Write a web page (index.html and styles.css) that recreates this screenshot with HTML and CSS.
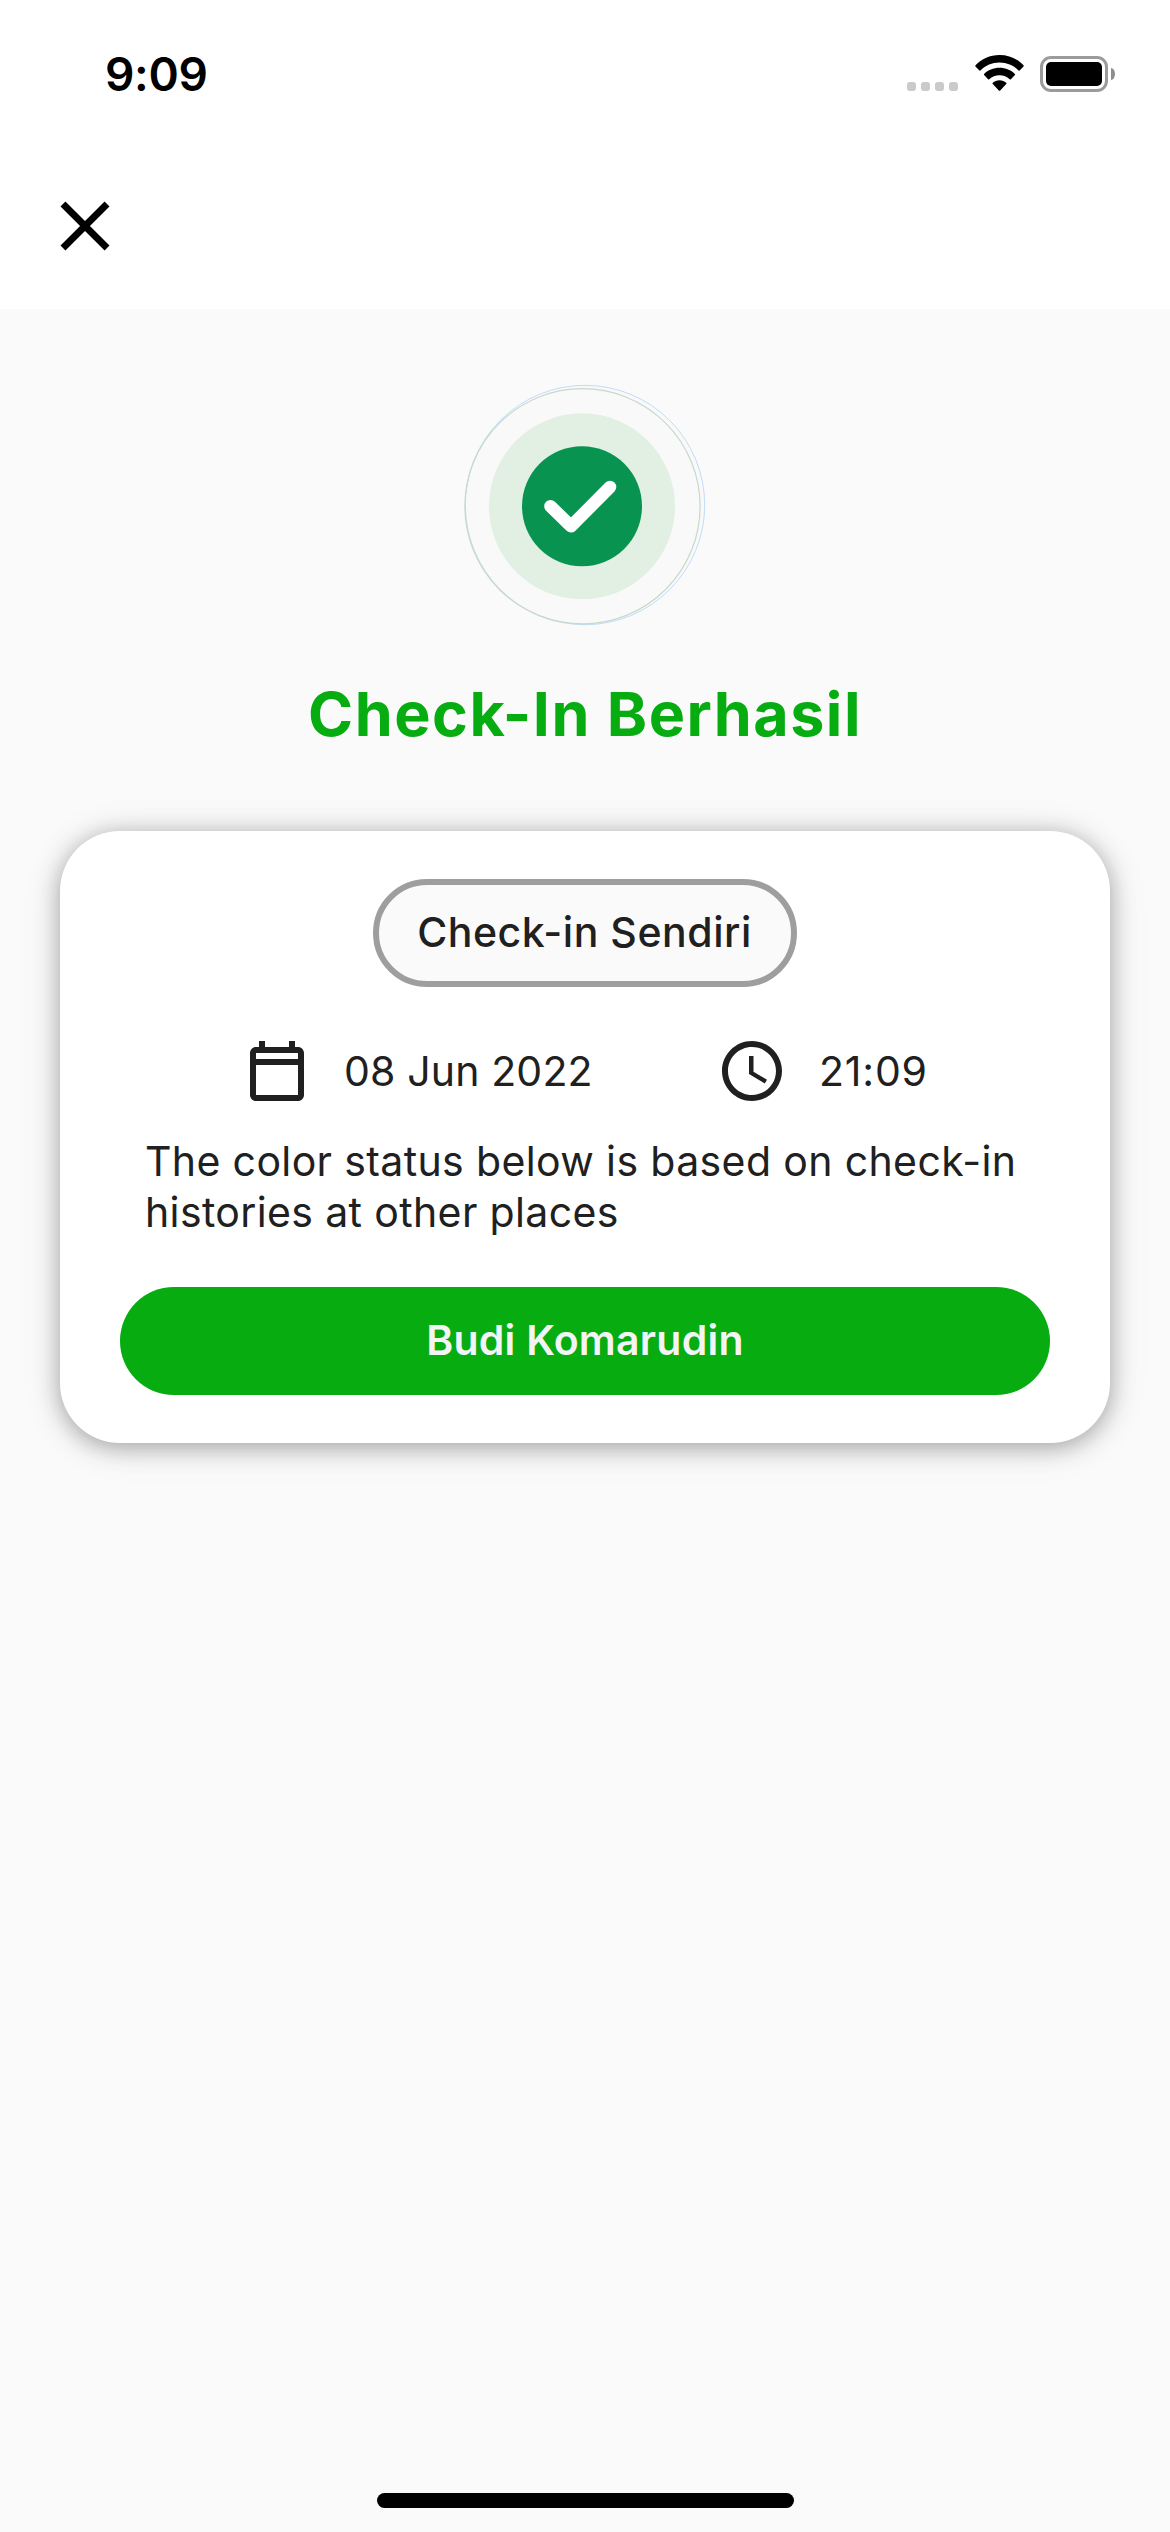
FILE: index.html
```html
<!DOCTYPE html>
<html lang="id">
<head>
<meta charset="utf-8">
<title>Check-In Berhasil</title>
<link rel="stylesheet" href="styles.css">
</head>
<body>
<div class="screen">
  <header class="header">
    <div class="status-bar">
      <span class="clock">9:09</span>
      <div class="status-icons">
        <div class="signal"><i></i><i></i><i></i><i></i></div>
        <svg class="wifi" viewBox="0 0 49 36">
          <path d="M24.5 0C34 0 42.500 3.800 48.500 10.300Q49 11 48.500 11.500L44.600 15.400Q44 16 43.300 15.300C38.500 10.600 32 7.600 24.500 7.600S10.500 10.600 5.700 15.300Q5 16 4.400 15.400L.5 11.500Q0 11 .5 10.300C6.500 3.800 15 0 24.500 0Z"/>
          <path d="M24.500 12.700C30.600 12.700 36 15 39.900 18.900Q40.400 19.500 39.900 20.100L35.900 24.200Q35.300 24.700 34.700 24.200C32 21.700 28.500 20.200 24.500 20.200S17 21.700 14.300 24.200Q13.700 24.700 13.100 24.200L9.100 20.100Q8.600 19.500 9.100 18.900C13 15 18.400 12.700 24.500 12.700Z"/>
          <path d="M24.500 25.200C27.200 25.200 29.500 26.200 31.200 27.800Q31.800 28.500 31.200 29.100L25.200 35.400Q24.500 36.100 23.800 35.400L17.800 29.100Q17.200 28.500 17.800 27.800C19.500 26.200 21.800 25.200 24.500 25.200Z"/>
        </svg>
        <div class="battery"><div class="battery-body"><div class="battery-level"></div></div><div class="battery-cap"></div></div>
      </div>
    </div>
    <svg class="close" viewBox="0 0 24 24"><path d="M19 6.410 17.590 5 12 10.590 6.410 5 5 6.410 10.590 12 5 17.590 6.410 19 12 13.410 17.590 19 19 17.590 13.410 12z"/></svg>
  </header>

  <main class="content">
    <svg class="success" viewBox="0 0 240 240">
      <circle cx="120" cy="120" r="119.700" fill="#f9f9f9" stroke="#a9cff5" stroke-width=".7"/>
      <circle cx="117.500" cy="121.300" r="117.600" fill="none" stroke="#c6d9ca" stroke-width="1.200"/>
      <circle cx="117" cy="121.300" r="93" fill="#e1f0e3"/>
      <circle cx="117" cy="121.300" r="60" fill="#089351"/>
      <path d="M85.500 121.200 106 141.300 145 102" fill="none" stroke="#fff" stroke-width="12.600" stroke-linecap="round" stroke-linejoin="round"/>
    </svg>
    <h1 class="title">Check-In Berhasil</h1>

    <section class="card">
      <div class="tag"><span>Check-in Sendiri</span></div>
      <div class="when">
        <svg class="icon" viewBox="0 0 24 24"><path d="M19 4h-1V2h-2v2H8V2H6v2H5c-1.100 0-2 .9-2 2v14c0 1.100.9 2 2 2h14c1.100 0 2-.9 2-2V6c0-1.100-.9-2-2-2zm0 16H5V10h14v10zm0-12H5V6h14v2z"/></svg>
        <span class="date">08 Jun 2022</span>
        <svg class="icon" viewBox="0 0 24 24"><path d="M11.990 2C6.470 2 2 6.480 2 12s4.470 10 9.990 10C17.520 22 22 17.520 22 12S17.520 2 11.990 2zM12 20c-4.420 0-8-3.580-8-8s3.580-8 8-8 8 3.580 8 8-3.580 8-8 8zm.5-13H11v6l5.250 3.150.75-1.230-4.500-2.670z"/></svg>
        <span class="time">21:09</span>
      </div>
      <p class="note">The color status below is based on check-in<br>histories at other places</p>
      <div class="person"><span>Budi Komarudin</span></div>
    </section>
  </main>
  <div class="home-indicator"></div>
</div>
</body>
</html>
```
FILE: styles.css
```css
* { box-sizing: border-box; }
body { margin: 0; background: #fafafa; font-family: Inter, "Liberation Sans", sans-serif; color: #202020; }
svg { display: block; flex: none; }
.screen { width: 1170px; height: 2532px; display: flex; flex-direction: column; overflow: hidden; }

.header { height: 309px; background: #fff; }
.status-bar { height: 184px; padding: 44px 55px 0 105px; display: flex; justify-content: space-between; align-items: flex-start; color: #000; }
.clock { font-size: 46px; line-height: 60px; font-weight: 600; letter-spacing: -.3px; white-space: nowrap; }
.status-icons { display: flex; padding-top: 11px; }
.signal { display: flex; gap: 5px; margin: 27px 17px 0 0; }
.signal i { width: 9px; height: 9px; border-radius: 3px; background: #cacaca; }
.wifi { width: 49px; height: 36px; }
.battery { display: flex; align-items: center; gap: 3px; height: 36px; margin: 1px 0 0 16px; }
.battery-body { width: 68px; height: 36px; border: 3px solid #9b9b9b; border-radius: 11px; padding: 3px; }
.battery-level { height: 24px; border-radius: 5px; background: #000; }
.battery-cap { width: 4px; height: 12px; border-radius: 0 4px 4px 0 / 0 6px 6px 0; background: #8e8e8e; }
.close { width: 84px; height: 84px; margin-left: 43px; }

.content { flex: 1; display: flex; flex-direction: column; padding: 76px 60px 0; }
.success { width: 240px; height: 240px; align-self: center; overflow: visible; }
.title { margin: 52px 0 0; height: 154px; line-height: 74px; font-size: 61px; font-weight: 700; letter-spacing: 1.5px; text-align: center; color: #06ac10; white-space: nowrap; }

.card { height: 612px; padding: 48px 60px; border-radius: 60px; background: #fff; display: flex; flex-direction: column; box-shadow: 0 4px 24px rgba(0, 0, 0, .34), 0 4px 50px rgba(0, 0, 0, .06); }
.tag { align-self: center; width: 424px; height: 108px; padding: 0 1px 2px 0; border: 6px solid #9e9e9e; border-radius: 54px; background: #fafafa; display: flex; align-items: center; justify-content: center; font-size: 41px; font-weight: 500; letter-spacing: .55px; white-space: nowrap; }
.when { height: 72px; margin: 48px 0 0 121px; padding-bottom: 0; display: flex; align-items: center; font-size: 41px; white-space: nowrap; }
.icon { width: 72px; height: 72px; fill: #202020; }
.date { width: 372px; margin-left: 31px; letter-spacing: .15px; }
.time { width: 110px; margin-left: 31px; letter-spacing: .8px; }
.note { margin: 29px 0 49px 25px; height: 102px; line-height: 51px; font-size: 41px; letter-spacing: .37px; white-space: nowrap; }
.person { height: 108px; padding-bottom: 2px; border-radius: 54px; background: #06ac10; color: #f3f4f6; display: flex; align-items: center; justify-content: center; font-size: 41px; font-weight: 600; letter-spacing: .25px; white-space: nowrap; }

.home-indicator { align-self: center; width: 417px; height: 15px; margin-bottom: 24px; border-radius: 8px; background: #000; }
```
